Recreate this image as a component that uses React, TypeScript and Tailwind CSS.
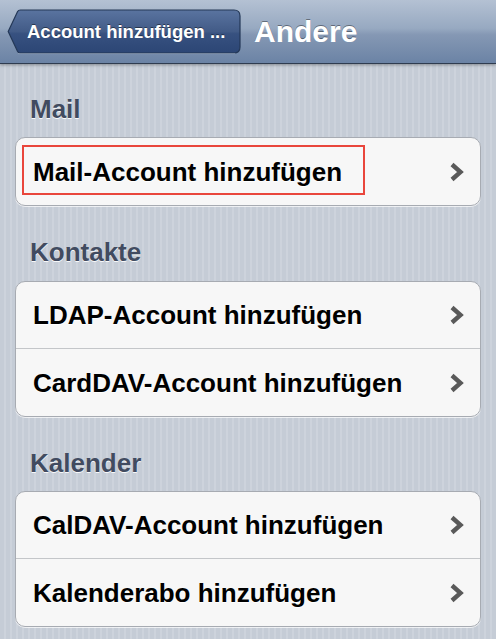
import React from "react";

const font = { fontFamily: '"Liberation Sans", Arial, Helvetica, sans-serif' };

function Chevron() {
  return (
    <svg width="16" height="20" viewBox="0 0 16 20" className="shrink-0">
      <polyline
        points="3,2.5 11.5,10 3,17.5"
        fill="none"
        stroke="#5a5a5a"
        strokeWidth="4.4"
        strokeLinejoin="miter"
        strokeLinecap="butt"
      />
    </svg>
  );
}

function Row({ label, last, highlight }: { label: string; last?: boolean; highlight?: boolean }) {
  return (
    <div
      className={
        "relative flex h-[67px] items-center justify-between pl-[17px] pr-[15px] " +
        (last ? "" : "border-b border-[#c4c6c9]")
      }
    >
      <span className="text-[26px] font-bold leading-[30px] text-black [text-shadow:0_1px_0_#ffffff]">
        {label}
      </span>
      <Chevron />
      {highlight && (
        <div className="pointer-events-none absolute left-[6px] top-[7px] h-[50px] w-[343px] border-2 border-[#e9463c]" />
      )}
    </div>
  );
}

function Header({ label, cls }: { label: string; cls: string }) {
  return (
    <div className={"px-[30px] " + cls}>
      <div className="text-[26px] font-bold leading-[30px] text-[#414b60] [text-shadow:0_1px_0_rgba(255,255,255,0.9)]">
        {label}
      </div>
    </div>
  );
}

function Group({ children }: { children: React.ReactNode }) {
  return (
    <div className="mx-[15px] overflow-hidden rounded-[10px] border border-[#a7abb2] bg-[#f7f7f7] shadow-[0_1px_0_rgba(255,255,255,0.7)]">
      {children}
    </div>
  );
}

export default function App() {
  return (
    <div
      style={font}
      className="relative h-[639px] w-[496px] overflow-hidden bg-[#c6cdd7] bg-[repeating-linear-gradient(90deg,#c5ccd6_0px,#c5ccd6_4px,#cdd3dc_4px,#cdd3dc_6px)]"
    >
      {/* Nav bar */}
      <div className="relative z-10 flex h-[64px] items-center border-b border-[#2f3c50] bg-[linear-gradient(180deg,#b4c1d3_0%,#97a9c1_45%,#8598b4_55%,#6b83a5_100%)] pl-[7px] shadow-[0_1px_3px_rgba(0,0,0,0.35)]">
        <div className="relative mt-[1px] flex h-[46px] w-[234px] items-center pl-[20px]">
          <svg className="absolute inset-0" width="234" height="46" viewBox="0 0 234 46">
            <defs>
              <linearGradient id="bb" x1="0" y1="0" x2="0" y2="1">
                <stop offset="0" stopColor="#5a74a0" />
                <stop offset="0.5" stopColor="#425b87" />
                <stop offset="0.55" stopColor="#375180" />
                <stop offset="1" stopColor="#2c4675" />
              </linearGradient>
            </defs>
            <path
              d="M1.2 22.5 L10.6 2.6 Q11.4 1 13.4 1 L227 1 Q233 1 233 7 L233 38 Q233 44 227 44 L13.4 44 Q11.4 44 10.6 42.4 Z"
              fill="url(#bb)"
              stroke="#243857"
              strokeWidth="1.2"
            />
            <path d="M11 44.6 L228 44.6" stroke="rgba(255,255,255,0.25)" strokeWidth="1" />
          </svg>
          <span className="relative text-[18.5px] font-bold leading-none text-white [text-shadow:0_-1px_0_rgba(0,0,0,0.45)]">
            Account hinzufügen ...
          </span>
        </div>
        <span className="ml-[13px] text-[30px] font-bold leading-none text-white [text-shadow:0_-1px_0_rgba(0,0,0,0.4)]">
          Andere
        </span>
      </div>

      <Header label="Mail" cls="pt-[30px] pb-[13px]" />
      <Group>
        <Row label="Mail-Account hinzufügen" last highlight />
      </Group>

      <Header label="Kontakte" cls="pt-[31px] pb-[14px]" />
      <Group>
        <Row label="LDAP-Account hinzufügen" />
        <Row label="CardDAV-Account hinzufügen" last />
      </Group>

      <Header label="Kalender" cls="pt-[31px] pb-[13px]" />
      <Group>
        <Row label="CalDAV-Account hinzufügen" />
        <Row label="Kalenderabo hinzufügen" last />
      </Group>
    </div>
  );
}
